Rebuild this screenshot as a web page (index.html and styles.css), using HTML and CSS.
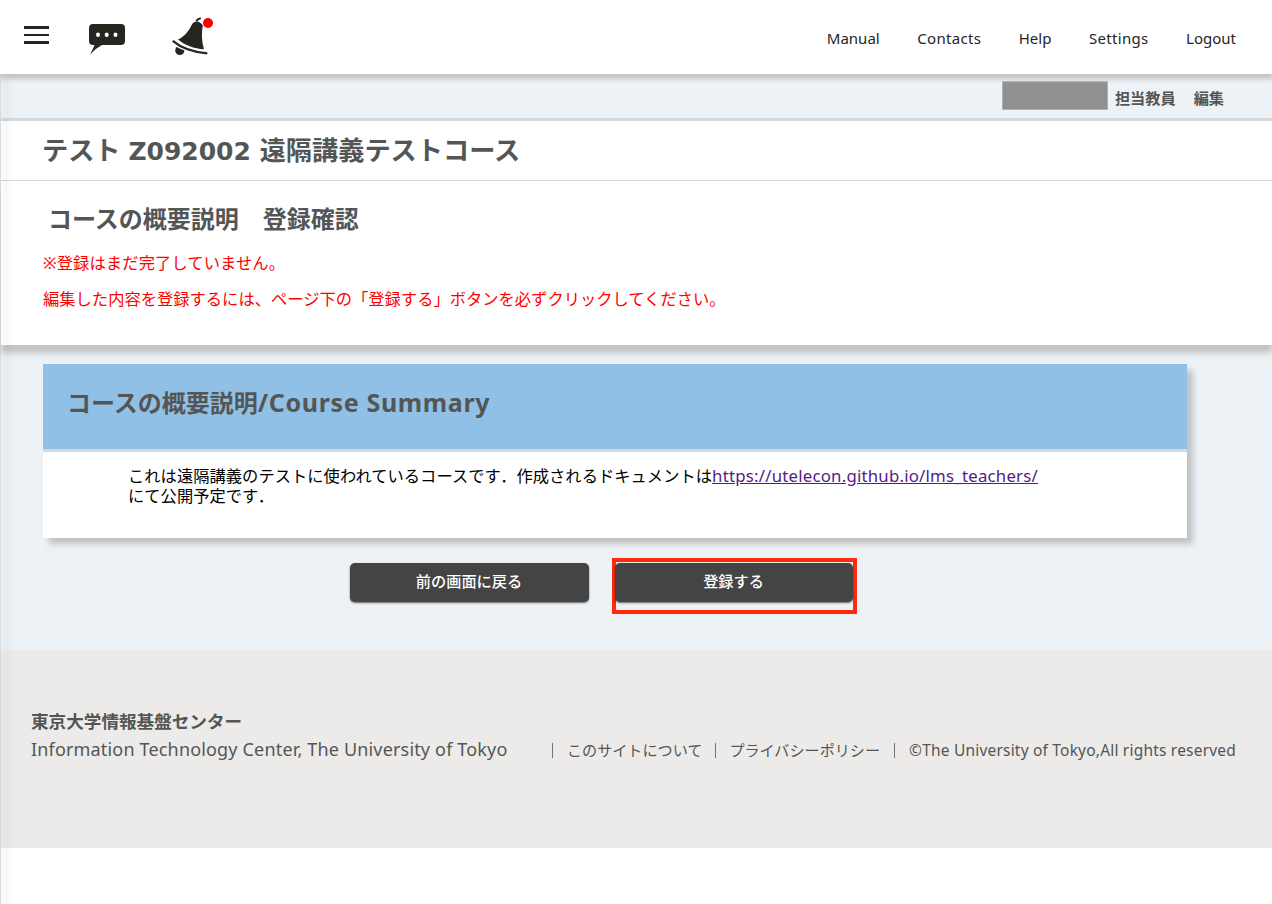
FILE: index.html
```html
<!DOCTYPE html>
<html lang="ja">
<head>
<meta charset="utf-8">
<title>コースの概要説明 登録確認</title>
<link rel="stylesheet" href="styles.css">
</head>
<body>
<header class="topbar">
  <div class="tools">
    <svg class="menu-icon" width="25" height="18" viewBox="0 0 25 18" fill="#26251f"><path d="M0 0h25v3H0zM0 8h25v2H0zM0 15h25v3H0z"/></svg>
    <svg class="chat-icon" width="38" height="32" viewBox="0 0 38 32"><path fill="#26251f" d="M4 1h28a4 4 0 0 1 4 4v13a4 4 0 0 1-4 4H13Q7 25 1 31.500Q4 26 5.500 22H4a4 4 0 0 1-4-4V5a4 4 0 0 1 4-4z"/><g fill="#fff"><ellipse cx="9" cy="11.700" rx="2" ry="2.300"/><ellipse cx="17.700" cy="11.700" rx="2" ry="2.300"/><ellipse cx="26.500" cy="11.700" rx="2" ry="2.300"/></g></svg>
    <svg class="bell-icon" width="44" height="40" viewBox="0 0 44 40">
      <circle cx="7.800" cy="33.500" r="4.600" fill="#26251f"/>
      <path d="M.800 24.500Q14 34.500 35.700 36" fill="none" stroke="#fff" stroke-width="5"/>
      <path d="M6 22.500C14.500 18.500 17.500 12 20.500 6.500Q25 2 30.800 8C29.500 16 29.500 24 32 32.300C22 31.500 13 28.500 6 22.500Z" fill="#26251f"/>
      <path d="M.800 23.800Q13.500 34.500 35.300 36.300" fill="none" stroke="#26251f" stroke-width="2.300"/>
      <path d="M24.500 4.500Q25.500 1.500 28.800 1.200" fill="none" stroke="#26251f" stroke-width="2"/>
      <circle cx="36" cy="6" r="5.600" fill="#fff"/>
      <circle cx="36" cy="6" r="5" fill="#f00"/>
    </svg>
  </div>
  <nav class="topnav">
    <a>Manual</a><a class="wide">Contacts</a><a>Help</a><a class="wide">Settings</a><a>Logout</a>
  </nav>
</header>
<main class="page">
  <div class="userbar"><span class="mask"></span><span class="role">担当教員</span><span>編集</span></div>
  <h1 class="course">テスト <span class="code">Z092002</span> 遠隔講義テストコース</h1>
  <section class="notice">
    <h2>コースの概要説明　登録確認</h2>
    <p class="first">※登録はまだ完了していません。</p>
    <p>編集した内容を登録するには、ページ下の「登録する」ボタンを必ずクリックしてください。</p>
  </section>
  <div class="content">
    <article class="card">
      <h2>コースの概要説明<span class="latin">/Course Summary</span></h2>
      <div class="summary">これは遠隔講義のテストに使われているコースです．作成されるドキュメントは<a>https://utelecon.github.io/lms_teachers/</a><br>にて公開予定です．</div>
    </article>
    <div class="actions">
      <button>前の画面に戻る</button>
      <div class="marked"><button>登録する</button></div>
    </div>
  </div>
  <footer class="footer">
    <div class="org"><strong>東京大学情報基盤センター</strong><span>Information Technology Center, The University of Tokyo</span></div>
    <div class="links"><i></i><a class="about">このサイトについて</a><i></i><a class="policy">プライバシーポリシー</a><i></i><span class="copy">©The University of Tokyo,All rights reserved</span></div>
  </footer>
</main>
</body>
</html>
```
FILE: styles.css
```css
* { box-sizing: border-box; }
body { margin: 0; height: 904px; overflow: hidden; background: #fff; color: #545655; font-family: "Noto Sans", "Noto Sans CJK JP", sans-serif; }
h1, h2, p { margin: 0; }
a, p, h1, h2, span, strong { white-space: nowrap; }

.topbar { position: relative; z-index: 3; height: 74px; background: #fff; display: flex; justify-content: space-between; box-shadow: 0 4px 5px 1px #c2c2c2; }
.tools { display: flex; align-items: flex-start; padding-left: 24px; }
.menu-icon { margin-top: 26px; }
.chat-icon { margin: 23px 0 0 40px; }
.bell-icon { margin: 17px 0 0 45px; }
.topnav { display: flex; color: #26251f; font-size: 15px; line-height: 20px; padding: 28px 36px 0 0; gap: 37.600px; }
.topnav .wide { letter-spacing: .3px; }

.page { position: relative; height: 830px; border-left: 1px solid #dadada; }
.page::before { content: ""; position: absolute; z-index: 2; left: 0; top: 0; width: 12px; height: 100%; background: linear-gradient(90deg, rgba(0, 0, 0, .01), rgba(0, 0, 0, .03) 50%, transparent); }
.userbar { height: 47px; background: #edf2f6; border-bottom: 3px solid #d5d9da; display: flex; justify-content: flex-end; padding: 7px 48px 0 0; font-weight: 700; font-size: 15.200px; line-height: 34px; }
.mask { width: 106px; height: 29px; background: #909090; border: 1px solid #b0b1b2; margin-right: 7px; }
.role { margin-right: 18px; }
.course { height: 60px; border-bottom: 1px solid #d5d9da; padding-left: 41px; font-size: 26.200px; line-height: 58px; }
.code { display: inline-block; font-family: "DejaVu Sans", sans-serif; font-size: 25px; margin: 0 2px 0 1px; }
.notice { position: relative; z-index: 1; height: 164px; background: #fff; padding: 20px 0 0 47px; box-shadow: 0 8px 6px #c2c2c2; }
.notice h2 { font-size: 24px; line-height: 36px; }
.notice p { color: #f00; font-size: 16.300px; line-height: 36px; margin-left: -5px; }
.notice .first { margin-top: 8px; letter-spacing: .1px; }
.content { height: 304px; background: #edf2f6; padding: 19px 85px 0 42px; }
.card { width: 1144px; height: 174px; background: #fff; box-shadow: 6px 6px 6px #c2c2c2; }
.card h2 { height: 88px; background: #91c0e7; border-bottom: 3px solid #d5d9da; padding-left: 24px; font-size: 24px; line-height: 76px; }
.latin { font-size: 25px; letter-spacing: .650px; }
.summary { color: #000; padding: 14px 0 0 85px; font-size: 16.250px; line-height: 20px; letter-spacing: .05px; }
.summary a { color: #551a8b; text-decoration: underline; font-size: 16.800px; letter-spacing: .220px; }
.actions { display: flex; padding: 20px 0 0 306px; }
.actions button { display: block; width: 239px; height: 39px; margin: 5px 1px 0 1px; border: 0; border-radius: 5px; padding: 0 1px 5px 0; background: #434443; color: #fff; font: 500 15.200px "Noto Sans CJK JP", sans-serif; box-shadow: 0 1px 2px rgba(0, 0, 0, .6); }
.marked { width: 245px; height: 56px; margin-left: 22px; border: 4px solid #ff2a0c; }
.marked button { margin: 1px 0 0 -1px; width: 238px; }
.footer { height: 199px; background: #ecebe9; display: flex; justify-content: space-between; padding: 58px 36px 0 30px; }
.org { display: flex; flex-direction: column; font-size: 17.600px; line-height: 28px; }
.org span { font-size: 18px; letter-spacing: .170px; }
.links { display: flex; align-items: center; height: 20px; margin-top: 33px; font-size: 15.100px; line-height: 20px; }
.links i { width: 1px; height: 15px; background: #737473; }
.about { margin: 0 13px 0 14px; }
.policy { margin: 0 14px 0 13px; }
.copy { margin-left: 14px; font-size: 15.500px; letter-spacing: .200px; }
```
